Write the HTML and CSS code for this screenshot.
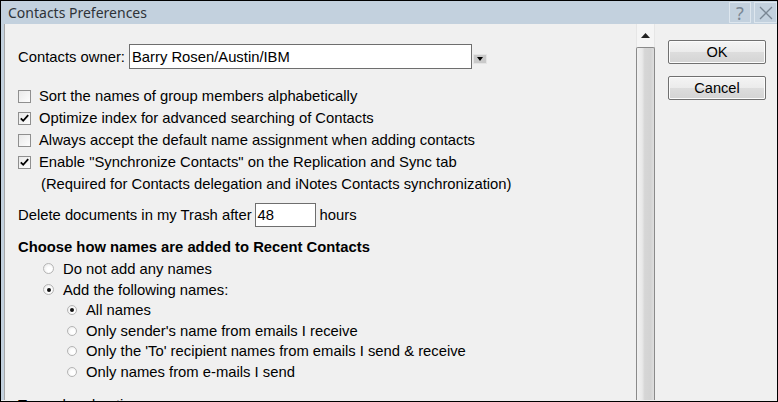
FILE: index.html
```html
<!DOCTYPE html>
<html>
<head>
<meta charset="utf-8">
<link rel="stylesheet" href="styles.css">
</head>
<body>
<div class="window">
  <div class="titlebar">
    <span class="title">Contacts Preferences</span>
    <div class="tbtns">
      <span class="tbtn help">?</span>
      <span class="tbtn close"><svg width="14" height="14" viewBox="0 0 14 14"><path d="M1 1 L13 13 M13 1 L1 13" stroke="#7a8794" stroke-width="1.3" fill="none"/></svg></span>
    </div>
  </div>
  <div class="main">
    <div class="content">
      <div class="owner">
        <span class="label">Contacts owner:</span>
        <div class="textbox owner-box">Barry Rosen/Austin/IBM</div>
        <span class="dropbtn"><svg width="6" height="4" viewBox="0 0 6 4"><path d="M0 0 H6 L3 4 Z" fill="#000"/></svg></span>
      </div>
      <div class="checks">
        <div class="row"><span class="cb"></span><span>Sort the names of group members alphabetically</span></div>
        <div class="row"><span class="cb"><svg width="11" height="11" viewBox="0 0 11 11"><path d="M1.8 5.3 L4.2 7.8 L9.2 2.2" stroke="#000" stroke-width="1.8" fill="none"/></svg></span><span>Optimize index for advanced searching of Contacts</span></div>
        <div class="row"><span class="cb"></span><span>Always accept the default name assignment when adding contacts</span></div>
        <div class="row"><span class="cb"><svg width="11" height="11" viewBox="0 0 11 11"><path d="M1.8 5.3 L4.2 7.8 L9.2 2.2" stroke="#000" stroke-width="1.8" fill="none"/></svg></span><span>Enable "Synchronize Contacts" on the Replication and Sync tab</span></div>
        <div class="row note">(Required for Contacts delegation and iNotes Contacts synchronization)</div>
      </div>
      <div class="delete">
        <span class="label">Delete documents in my Trash after</span>
        <div class="textbox hours-box">48</div>
        <span class="hours">hours</span>
      </div>
      <div class="heading">Choose how names are added to Recent Contacts</div>
      <div class="radios">
        <div class="rrow"><span class="radio"></span><span>Do not add any names</span></div>
        <div class="rrow"><span class="radio on"></span><span>Add the following names:</span></div>
      </div>
      <div class="subradios">
        <div class="srow"><span class="radio small on"></span><span>All names</span></div>
        <div class="srow"><span class="radio small"></span><span>Only sender's name from emails I receive</span></div>
        <div class="srow"><span class="radio small"></span><span>Only the 'To' recipient names from emails I send &amp; receive</span></div>
        <div class="srow"><span class="radio small"></span><span>Only names from e-mails I send</span></div>
      </div>
      <div class="typeahead">Type ahead options</div>
    </div>
    <div class="scrollbar">
      <div class="sb-up"><svg width="9" height="5" viewBox="0 0 9 5"><path d="M0 5 L4.5 0 L9 5 Z" fill="#222"/></svg></div>
      <div class="sb-thumb"></div>
    </div>
    <div class="actions">
      <button class="btn">OK</button>
      <button class="btn">Cancel</button>
    </div>
  </div>
</div>
</body>
</html>
```

FILE: styles.css
```css
html, body {
  margin: 0;
  padding: 0;
  background: #f0f0f0;
}
.window {
  width: 778px;
  height: 402px;
  box-sizing: border-box;
  border: 1px solid #000;
  overflow: hidden;
  background: #f0f0f0;
  font-family: "Liberation Sans", Arial, sans-serif;
  font-size: 14.8px;
  color: #000;
}
.titlebar {
  height: 23px;
  background: #c3d1de;
  display: flex;
  align-items: center;
  justify-content: space-between;
  padding-left: 7px;
}
.title {
  font-family: "Noto Sans", "Open Sans", sans-serif;
  font-size: 14px;
  color: #2e3338;
}
.tbtns {
  display: flex;
  gap: 3px;
  align-self: flex-start;
  margin-top: 1px;
}
.tbtn {
  width: 20px;
  height: 19px;
  border: 1px solid #dde6ee;
  display: flex;
  align-items: center;
  justify-content: center;
  color: #7a8794;
  font-family: "Noto Sans", sans-serif;
  font-size: 18px;
  line-height: 1;
}
.tbtn.close {
  width: 21px;
}
.main {
  display: flex;
  height: 376px;
  border-left: 3px solid #c3d1de;
  box-shadow: inset 1px 0 0 #a7a7a7;
}
.content {
  flex: 0 0 632px;
  box-sizing: border-box;
  padding-left: 14px;
}
.label {
  white-space: nowrap;
}
.owner {
  margin-top: 20px;
  height: 25px;
  display: flex;
  align-items: center;
}
.textbox {
  box-sizing: border-box;
  background: #fff;
  border: 1px solid #6e6e6e;
  display: flex;
  align-items: center;
  padding-left: 2px;
}
.owner-box {
  margin-left: 4px;
  width: 343px;
  height: 25px;
}
.dropbtn {
  margin-left: 1px;
  width: 14px;
  height: 10px;
  background: #c9c9c9;
  border: 1px solid #e4e4e4;
  box-sizing: border-box;
  display: flex;
  align-items: center;
  justify-content: center;
  align-self: flex-start;
  margin-top: 10px;
}
.checks {
  margin-top: 16px;
}
.row {
  height: 22px;
  display: flex;
  align-items: center;
}
.cb {
  width: 13px;
  height: 13px;
  box-sizing: border-box;
  border: 1px solid #8f8f8f;
  background: linear-gradient(135deg, #e9e9e9, #fdfdfd);
  margin-right: 8px;
  display: flex;
  align-items: center;
  justify-content: center;
  flex: none;
}
.note {
  padding-left: 23px;
}
.delete {
  margin-top: 8px;
  height: 24px;
  display: flex;
  align-items: center;
}
.hours-box {
  margin-left: 3px;
  width: 61px;
  height: 24px;
}
.hours {
  margin-left: 4px;
}
.heading {
  margin-top: 9px;
  height: 22px;
  line-height: 22px;
  font-weight: bold;
}
.rrow {
  height: 21px;
  display: flex;
  align-items: center;
  padding-left: 25px;
}
.srow {
  height: 20.5px;
  display: flex;
  align-items: center;
  padding-left: 49px;
}
.radio {
  width: 11px;
  height: 11px;
  box-sizing: border-box;
  border-radius: 50%;
  border: 1px solid #b5b5b5;
  background: radial-gradient(circle at 60% 60%, #ffffff 30%, #e3e3e3 100%);
  margin-right: 9px;
  flex: none;
  display: flex;
  align-items: center;
  justify-content: center;
}
.radio.small {
  width: 10px;
  height: 10px;
}
.radio.on::after {
  content: "";
  width: 4px;
  height: 4px;
  border-radius: 50%;
  background: #111;
}
.typeahead {
  margin-top: 12px;
  height: 22px;
  line-height: 22px;
}
.scrollbar {
  flex: 0 0 19px;
  display: flex;
  flex-direction: column;
  background: #f5f5f5;
  box-shadow: inset 1px 0 0 #e6e6e6, inset -1px 0 0 #e6e6e6;
}
.sb-up {
  height: 23px;
  display: flex;
  justify-content: center;
  align-items: flex-start;
  padding-top: 9px;
  box-sizing: border-box;
}
.sb-thumb {
  flex: 1;
  border: 1px solid #8a8a8a;
  border-bottom: none;
  border-radius: 2px 2px 0 0;
  background: linear-gradient(90deg, #f1f1f1 0%, #e9e9e9 30%, #d6d6d6 45%, #d3d3d3 80%, #dedede 100%);
}
.actions {
  flex: 1;
  display: flex;
  flex-direction: column;
  padding-left: 13px;
  padding-top: 16px;
  gap: 12px;
}
.btn {
  width: 98px;
  height: 24px;
  box-sizing: border-box;
  border: 1px solid #707070;
  border-radius: 2px;
  background: linear-gradient(180deg, #f4f4f4 0%, #ebebeb 50%, #dddddd 51%, #d4d4d4 100%);
  box-shadow: inset 0 0 0 1px #fcfcfc;
  font-family: "Liberation Sans", Arial, sans-serif;
  font-size: 14.6px;
  color: #000;
  padding: 0;
}
```
